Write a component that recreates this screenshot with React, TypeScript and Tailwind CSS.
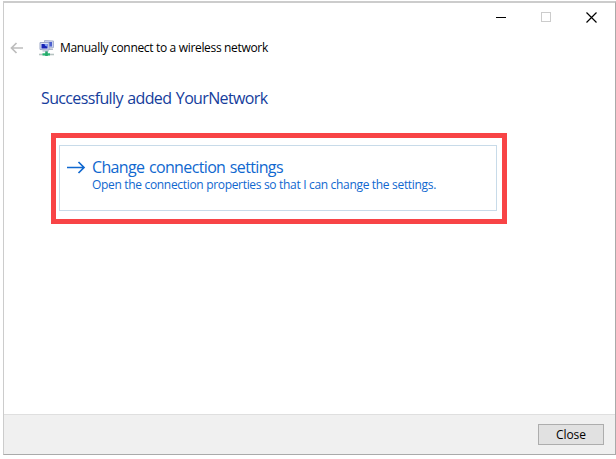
import type { ReactNode } from "react";

function WindowControls() {
  return (
    <div className="flex h-[30px] justify-end pr-[2px] text-black">
      <button aria-label="Minimize" className="flex w-[45px] items-center justify-center">
        <svg width="12" height="12" viewBox="0 0 12 12" shapeRendering="crispEdges">
          <path d="M1 5.5h10" stroke="currentColor" />
        </svg>
      </button>
      <button aria-label="Maximize" disabled className="flex w-[45px] items-center justify-center text-[#cccccc]">
        <svg width="12" height="12" viewBox="0 0 12 12" shapeRendering="crispEdges">
          <rect x="1.5" y="0.5" width="9" height="9" fill="none" stroke="currentColor" />
        </svg>
      </button>
      <button aria-label="Close window" className="flex w-[45px] items-center justify-center">
        <svg width="12" height="12" viewBox="0 0 12 12">
          <path d="M1.500 0.500l10 10M11.500 0.500L1.500 10.500" stroke="currentColor" strokeWidth="1.2" />
        </svg>
      </button>
    </div>
  );
}

function NetworkIcon() {
  return (
    <svg width="16" height="16" viewBox="0 0 16 16" className="-mt-px shrink-0">
      <path d="M0 14.500h15" stroke="#b7c4c2" strokeWidth="1.6" />
      <path d="M3.500 14.400h7.500" stroke="#27b973" strokeWidth="2.2" />
      <path d="M7.500 11v5" stroke="#27a96c" strokeWidth="2.6" />
      <path d="M5.500 0.500l9 0.500v6.500l-9 1z" fill="#c9d1ef" stroke="#abb4cf" />
      <path d="M7 2h6v4.500h-6z" fill="#4d60cf" />
      <path d="M10 8.500h4v1.500h-4z" fill="#b2b8ca" />
      <path d="M1 2.500h9v7.500l-9-0.500z" fill="#dde2f6" stroke="#9da8c7" />
      <path d="M2.500 4h6v4.500h-6z" fill="#1723b4" />
      <path d="M5.500 4h3v2.800L6 5.800z" fill="#7f9ef2" />
      <path d="M3.500 10.500h6v1h-6z" fill="#a5b0c4" />
    </svg>
  );
}

function CommandLink({ title, children }: { title: string; children: ReactNode }) {
  return (
    <button className="flex h-[66px] w-[438px] items-start border border-[#c8dbe9] pl-[7px] text-left text-[#1068cf]">
      <svg width="19" height="14" viewBox="0 0 19 14" fill="none" className="mt-[14px] shrink-0">
        <path d="M0 7.500h17M11.500 2L17 7.500L11.500 13" stroke="currentColor" strokeWidth="1.7" />
      </svg>
      <span className="ml-[6px] flex flex-col whitespace-nowrap">
        <span className="mt-[10px] h-[21px] text-[16px] leading-[22px] tracking-[-0.64px] [word-spacing:1px]">
          {title}
        </span>
        <span className="h-4 text-[12px] leading-4 tracking-[-0.32px]">{children}</span>
      </span>
    </button>
  );
}

export default function App() {
  return (
    <div className="h-[459px] w-[616px] overflow-hidden bg-white pt-px pl-[3px] font-['Open_Sans','Noto_Sans',sans-serif]">
      <main className="flex h-[454px] w-[613px] flex-col border border-t-2 border-[#aaaaaa] border-t-[#cccccc] border-l-[#cccccc] bg-white">
        <WindowControls />

        <header className="flex h-[30px] items-center pl-[6px]">
          <svg width="14" height="12" viewBox="0 0 14 12" fill="none" className="-mt-px shrink-0">
            <path d="M13 6H1.500M6.500 1L1.500 6L6.500 11" stroke="#bdbdbd" strokeWidth="1.7" />
          </svg>
          <div className="ml-[15px] flex items-center gap-[5px]">
            <NetworkIcon />
            <span className="text-[12px] leading-4 tracking-[-0.33px] whitespace-nowrap text-black">
              Manually connect to a wireless network
            </span>
          </div>
        </header>

        <section className="flex-1 pl-[37px]">
          <h1 className="mt-[23px] h-6 text-[16px] leading-6 tracking-[-0.64px] whitespace-nowrap text-[#153d9c] [word-spacing:1px]">
            Successfully added YourNetwork
          </h1>
          <div className="mt-[23px] ml-[10px] h-[91px] w-[456px] border-5 border-[#f84446] px-[3px] pt-[7px]">
            <CommandLink title="Change connection settings">
              Open the connection properties so that I can change the settings.
            </CommandLink>
          </div>
        </section>

        <footer className="flex h-10 items-center justify-end border-t border-[#dfdfdf] bg-[#f0f0f0] pr-[11px]">
          <button className="h-[21px] w-[66px] border border-[#adadad] bg-[#e1e1e1] text-[12px] leading-[19px] tracking-[-0.1px] text-black">
            Close
          </button>
        </footer>
      </main>
    </div>
  );
}
